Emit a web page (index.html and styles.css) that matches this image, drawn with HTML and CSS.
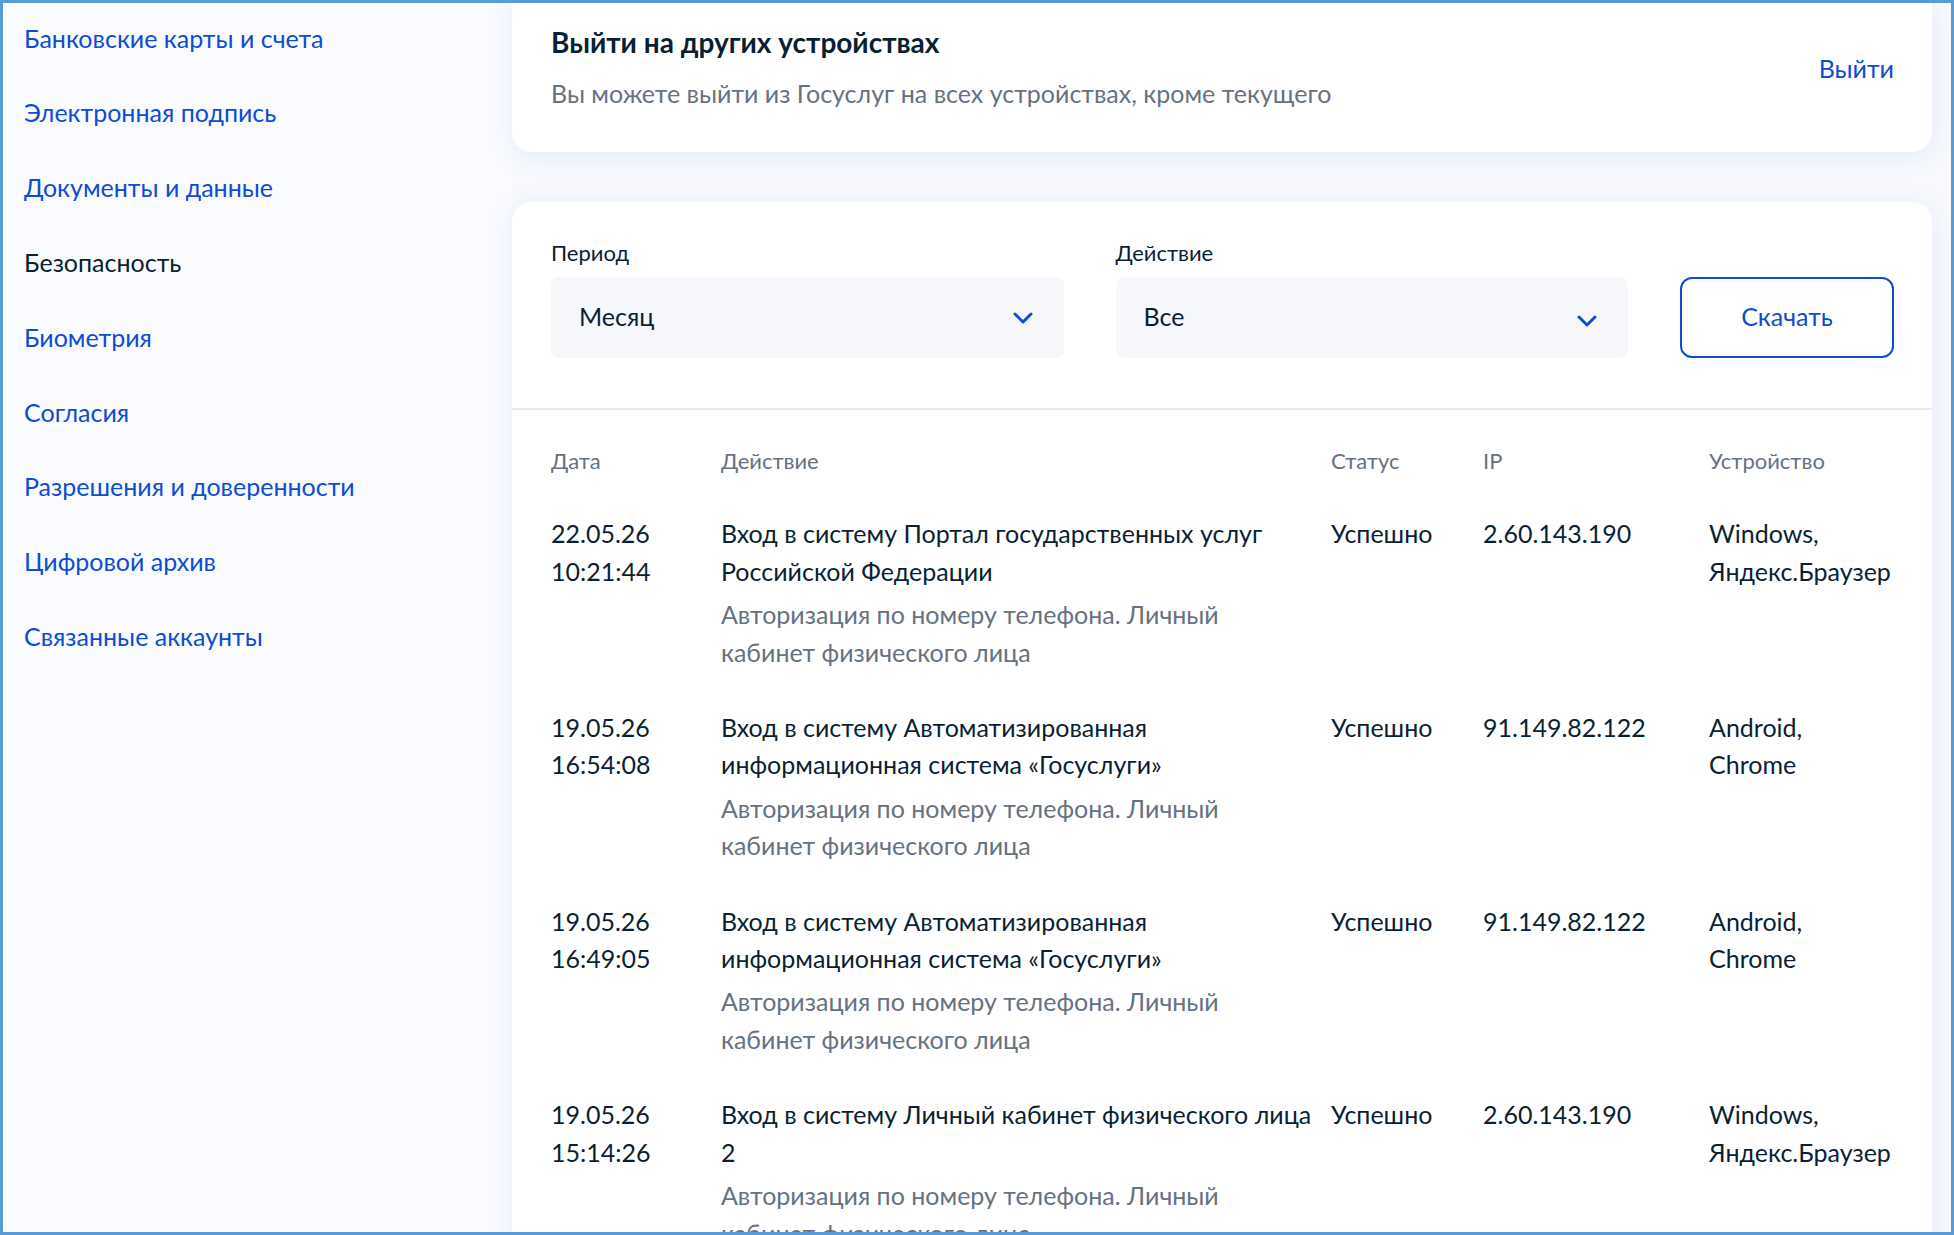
FILE: index.html
```html
<!DOCTYPE html>
<html lang="ru">
<head>
    <meta charset="UTF-8">
    <title>Безопасность</title>
    <link rel="stylesheet" href="styles.css">
</head>
<body>
<div class="frame">
    <nav class="sidebar">
        <a class="side-link" href="#">Банковские карты и счета</a>
        <a class="side-link" href="#">Электронная подпись</a>
        <a class="side-link" href="#">Документы и данные</a>
        <a class="side-link active" href="#">Безопасность</a>
        <a class="side-link" href="#">Биометрия</a>
        <a class="side-link" href="#">Согласия</a>
        <a class="side-link" href="#">Разрешения и доверенности</a>
        <a class="side-link" href="#">Цифровой архив</a>
        <a class="side-link" href="#">Связанные аккаунты</a>
    </nav>

    <main class="main">
        <section class="card logout-card">
            <div class="logout-text">
                <h2 class="card-title">Выйти на других устройствах</h2>
                <p class="card-sub">Вы можете выйти из Госуслуг на всех устройствах, кроме текущего</p>
            </div>
            <a class="logout-link" href="#">Выйти</a>
        </section>

        <section class="card history-card">
            <div class="filters">
                <div class="field">
                    <div class="field-label">Период</div>
                    <div class="select">
                        <span>Месяц</span>
                        <svg class="chevron" width="20" height="12" viewBox="0 0 20 12"><path d="M2 2l8 8 8-8" fill="none" stroke="#0d4cd3" stroke-width="3" stroke-linecap="round" stroke-linejoin="round"/></svg>
                    </div>
                </div>
                <div class="field">
                    <div class="field-label">Действие</div>
                    <div class="select">
                        <span>Все</span>
                        <svg class="chevron chevron-low" width="20" height="12" viewBox="0 0 20 12"><path d="M2 2l8 8 8-8" fill="none" stroke="#0d4cd3" stroke-width="3" stroke-linecap="round" stroke-linejoin="round"/></svg>
                    </div>
                </div>
                <button class="download-btn">Скачать</button>
            </div>

            <div class="history">
                <div class="history-row history-head">
                    <div>Дата</div>
                    <div>Действие</div>
                    <div>Статус</div>
                    <div>IP</div>
                    <div>Устройство</div>
                </div>

                <div class="history-row">
                    <div>22.05.26<br>10:21:44</div>
                    <div>
                        <div class="action-main">Вход в систему Портал государственных услуг<br>Российской Федерации</div>
                        <div class="action-desc">Авторизация по номеру телефона. Личный<br>кабинет физического лица</div>
                    </div>
                    <div>Успешно</div>
                    <div>2.60.143.190</div>
                    <div>Windows,<br>Яндекс.Браузер</div>
                </div>

                <div class="history-row">
                    <div>19.05.26<br>16:54:08</div>
                    <div>
                        <div class="action-main">Вход в систему Автоматизированная<br>информационная система «Госуслуги»</div>
                        <div class="action-desc">Авторизация по номеру телефона. Личный<br>кабинет физического лица</div>
                    </div>
                    <div>Успешно</div>
                    <div>91.149.82.122</div>
                    <div>Android,<br>Chrome</div>
                </div>

                <div class="history-row">
                    <div>19.05.26<br>16:49:05</div>
                    <div>
                        <div class="action-main">Вход в систему Автоматизированная<br>информационная система «Госуслуги»</div>
                        <div class="action-desc">Авторизация по номеру телефона. Личный<br>кабинет физического лица</div>
                    </div>
                    <div>Успешно</div>
                    <div>91.149.82.122</div>
                    <div>Android,<br>Chrome</div>
                </div>

                <div class="history-row">
                    <div>19.05.26<br>15:14:26</div>
                    <div>
                        <div class="action-main">Вход в систему Личный кабинет физического лица<br>2</div>
                        <div class="action-desc">Авторизация по номеру телефона. Личный<br>кабинет физического лица</div>
                    </div>
                    <div>Успешно</div>
                    <div>2.60.143.190</div>
                    <div>Windows,<br>Яндекс.Браузер</div>
                </div>
            </div>
        </section>
    </main>
</div>
</body>
</html>
```

FILE: styles.css
```css
body {
    margin: 0;
    padding: 0;
    font-family: Lato, "Noto Sans", sans-serif;
    color: #0b1f33;
    background: #ffffff;
}
.frame {
    width: 1954px;
    height: 1235px;
    box-sizing: border-box;
    border: 3px solid #5b9bd5;
    background-color: #f7f9fd;
    display: flex;
    overflow: hidden;
}

/* left menu */
.sidebar {
    width: 509px;
    flex-shrink: 0;
    margin-top: -2px;
    padding-left: 21px;
    box-sizing: border-box;
    display: flex;
    flex-direction: column;
    background-color: #f9fbff;
}
.side-link {
    display: block;
    padding: 18.7px 0;
    font-size: 25px;
    line-height: 37.4px;
    color: #0d4cd3;
    text-decoration: none;
}
.side-link.active {
    color: #0b1f33;
}

.main {
    flex: 1;
    padding-right: 19px;
    display: flex;
    flex-direction: column;
}
.card {
    background: #ffffff;
    border-radius: 20px;
    box-shadow: 0 4px 26px rgba(40, 90, 190, 0.09);
}

/* logout card */
.logout-card {
    margin-top: -16px;
    padding: 37px 38px 40px 39px;
    display: flex;
    align-items: center;
    justify-content: space-between;
}
.card-title {
    margin: 0;
    font-size: 28px;
    line-height: 37px;
    font-weight: 700;
}
.card-sub {
    margin: 14px 0 0;
    font-size: 25px;
    line-height: 37.4px;
    color: #66727f;
}
.logout-link {
    font-size: 25px;
    line-height: 37.4px;
    color: #0d4cd3;
    text-decoration: none;
}

/* history card */
.history-card {
    margin-top: 50px;
    flex: 1;
    border-bottom-left-radius: 0;
    border-bottom-right-radius: 0;
}
.filters {
    display: grid;
    grid-template-columns: 1fr 1fr 214px;
    column-gap: 52px;
    align-items: end;
    padding: 37px 38px 50px 39px;
    border-bottom: 2px solid #e6ebf2;
}
.field-label {
    font-size: 22px;
    line-height: 28px;
    margin-bottom: 10px;
}
.select {
    height: 81px;
    box-sizing: border-box;
    padding: 0 31px 0 28px;
    background-color: #f5f7fa;
    border-radius: 8px;
    display: flex;
    align-items: center;
    justify-content: space-between;
    font-size: 25px;
}
.select span {
    margin-top: -4px;
}
.chevron {
    display: block;
}
.chevron-low {
    margin-top: 6px;
}
.download-btn {
    height: 81px;
    padding-bottom: 4px;
    background: #ffffff;
    border: 2px solid #0d4cd3;
    border-radius: 12px;
    color: #0d4cd3;
    font-family: inherit;
    font-size: 25px;
    cursor: pointer;
}

.history {
    padding: 37px 38px 0 39px;
}
.history-row {
    display: grid;
    grid-template-columns: 150px 590px 132px 206px 184px;
    column-gap: 20px;
    font-size: 25px;
    line-height: 37.4px;
    margin-bottom: 38px;
}
.history-head {
    font-size: 22px;
    line-height: 28px;
    color: #66727f;
    margin-bottom: 40px;
}
.action-main {
    white-space: nowrap;
}
.action-desc {
    margin-top: 6px;
    color: #66727f;
}
```
